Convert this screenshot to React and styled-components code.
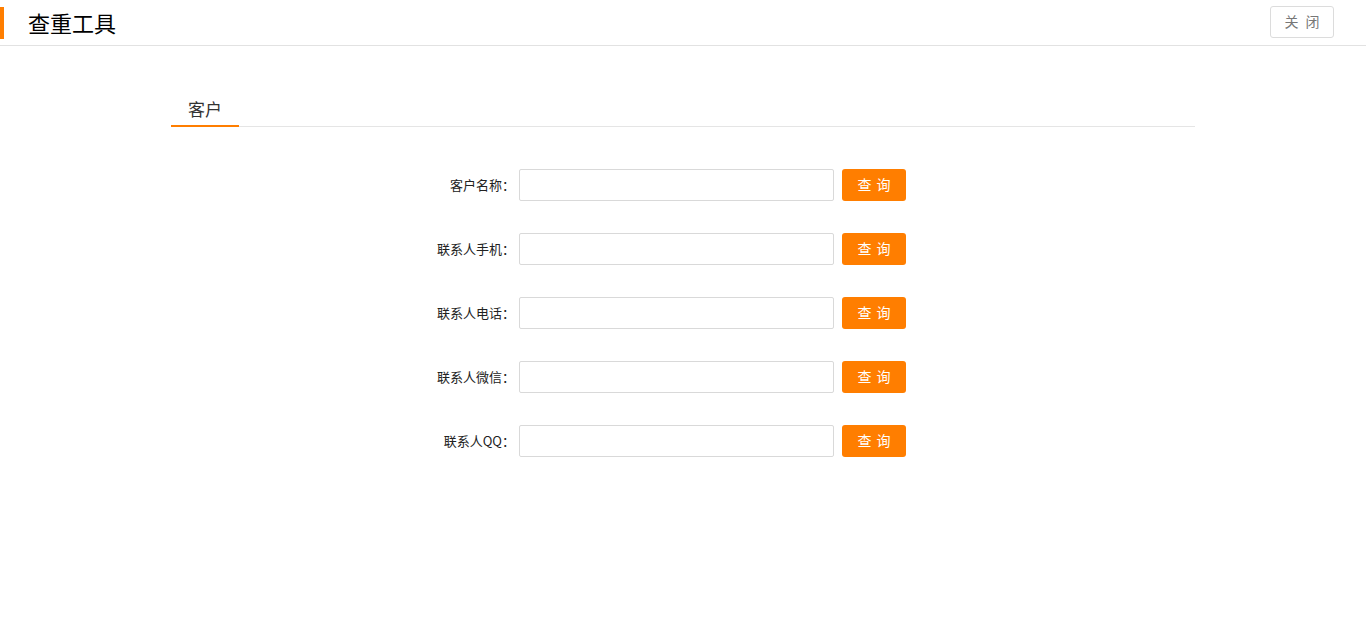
import React from "react";
import styled, { createGlobalStyle } from "styled-components";

const Global = createGlobalStyle`
  html, body { margin: 0; padding: 0; background: #fff; }
  body { font-family: "Liberation Sans", "Noto Sans CJK SC", sans-serif; color: #333; }
  * { box-sizing: border-box; }
`;

const Header = styled.header`
  height: 46px;
  border-bottom: 1px solid #e2e2e2;
  display: flex;
  align-items: center;
  justify-content: space-between;
  padding-right: 32px;
`;

const TitleWrap = styled.div`
  display: flex;
  align-items: center;
  height: 100%;
`;

const Accent = styled.span`
  width: 4px;
  height: 32px;
  background: #ff7e00;
  margin-right: 24px;
  margin-top: 1px;
`;

const Title = styled.h1`
  margin: 0;
  font-size: 22px;
  font-weight: normal;
  color: #000;
  font-family: "Noto Sans CJK SC", sans-serif;
  line-height: 1;
  margin-top: -2px;
`;

const CloseButton = styled.button`
  width: 64px;
  height: 32px;
  border: 1px solid #dcdcdc;
  border-radius: 3px;
  background: #fff;
  color: #777;
  font-size: 14px;
  font-family: "Noto Sans CJK SC", sans-serif;
  letter-spacing: 2px;
  padding: 0 0 2px 2px;
  margin-top: -1px;
  cursor: pointer;
`;

const Main = styled.main`
  width: 1024px;
  margin: 46px auto 0;
`;

const TabBar = styled.div`
  display: flex;
  border-bottom: 1px solid #e5e5e5;
`;

const Tab = styled.div`
  padding: 0 17px;
  height: 35px;
  line-height: 33px;
  font-size: 17px;
  color: #333;
  font-family: "Noto Sans CJK SC", sans-serif;
  border-bottom: 2px solid ${p => (p.$active ? "#ff7e00" : "transparent")};
  margin-bottom: -1px;
`;

const Form = styled.div`
  display: flex;
  flex-direction: column;
  gap: 32px;
  padding-top: 42px;
`;

const Row = styled.div`
  display: flex;
  align-items: center;
  height: 32px;
`;

const Label = styled.label`
  width: 348px;
  text-align: right;
  font-size: 13px;
  color: #222;
  font-family: "Noto Sans CJK SC", sans-serif;
  padding-right: 4px;
  padding-bottom: 2px;
`;

const Input = styled.input`
  width: 315px;
  height: 32px;
  border: 1px solid #d9d9d9;
  border-radius: 2px;
  padding: 0 8px;
  outline: none;
  font-size: 13px;
`;

const QueryButton = styled.button`
  width: 64px;
  height: 32px;
  margin-left: 8px;
  border: none;
  border-radius: 3px;
  background: #ff7e00;
  color: #fff;
  font-size: 14px;
  font-family: "Noto Sans CJK SC", sans-serif;
  letter-spacing: 1px;
  padding: 0 0 2px 1px;
  cursor: pointer;
`;

const fields = ["客户名称：", "联系人手机：", "联系人电话：", "联系人微信：", "联系人QQ："];

export default function App() {
  return (
    <>
      <Global />
      <Header>
        <TitleWrap>
          <Accent />
          <Title>查重工具</Title>
        </TitleWrap>
        <CloseButton>关 闭</CloseButton>
      </Header>
      <Main>
        <TabBar>
          <Tab $active>客户</Tab>
        </TabBar>
        <Form>
          {fields.map(f => (
            <Row key={f}>
              <Label>{f}</Label>
              <Input />
              <QueryButton>查 询</QueryButton>
            </Row>
          ))}
        </Form>
      </Main>
    </>
  );
}
